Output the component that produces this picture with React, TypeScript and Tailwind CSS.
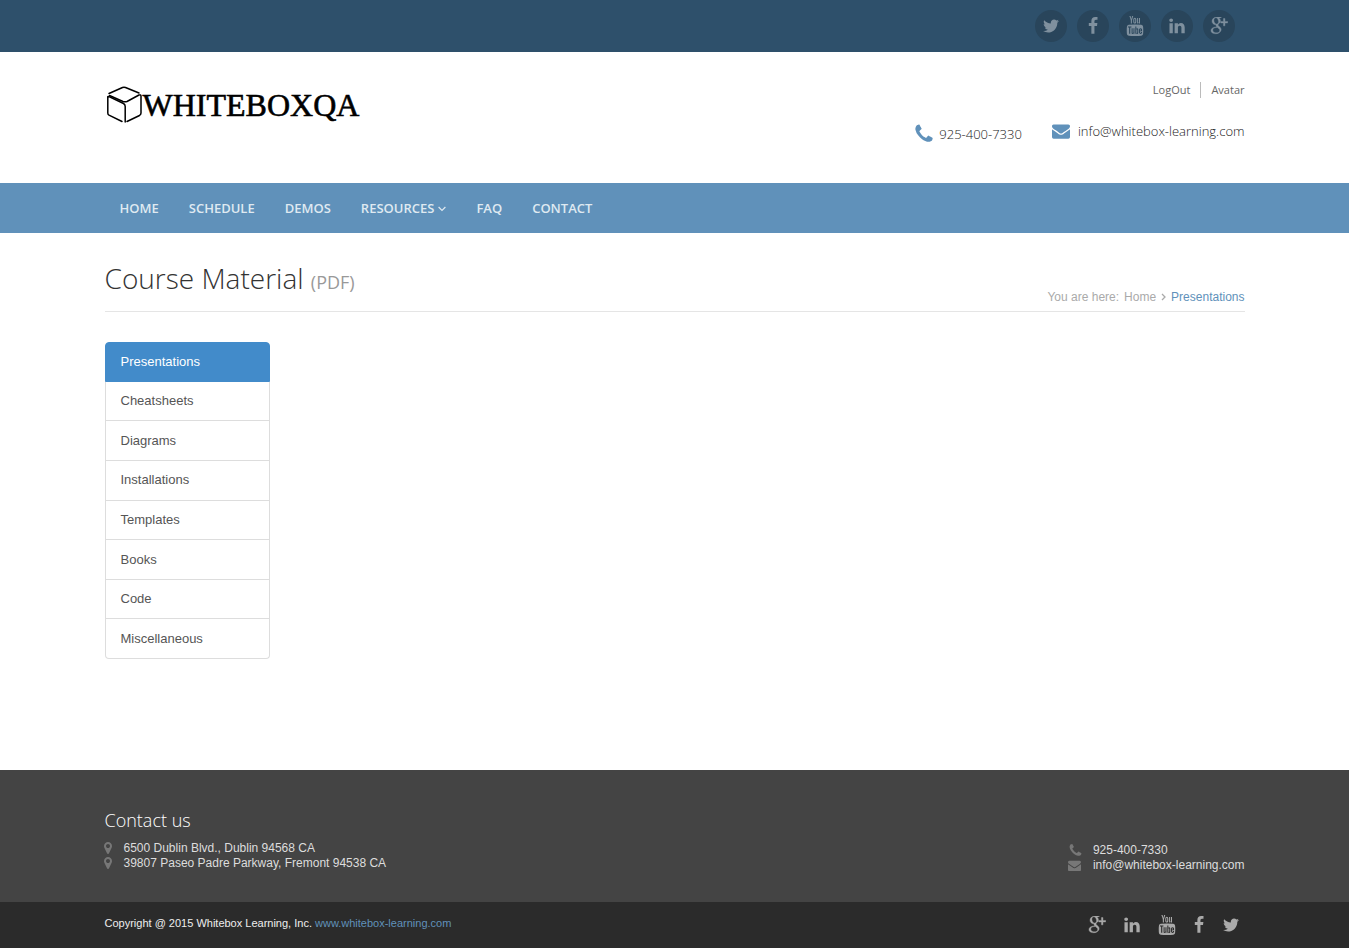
import type { ReactNode } from "react";

const PATHS = {
  twitter:
    "M1684 408q-67 98-162 167 1 14 1 42 0 130-38 259.5t-115.5 248.5-184.5 210.5-258 146-323 54.5q-271 0-496-145 35 4 78 4 225 0 401-138-105-2-188-64.5t-114-159.5q33 5 61 5 43 0 85-11-112-23-185.5-111.5t-73.5-205.5v-4q68 38 146 41-66-44-105-115t-39-154q0-88 44-163 121 149 294.5 238.5t371.5 99.5q-8-38-8-74 0-134 94.5-228.5t228.5-94.5q140 0 236 102 109-21 205-78-37 115-142 178 93-10 186-50z",
  facebook:
    "M1343 12v264h-157q-86 0-116 36t-30 108v189h293l-39 296h-254v759h-306v-759h-255v-296h255v-218q0-186 104-288.5t277-102.5q147 0 228 12z",
  youtube:
    "M1099 1244v211q0 67-39 67-23 0-45-22v-301q22-22 45-22 39 0 39 67zm338 1v46h-90v-46q0-68 45-68t45 68zm-966-218h107v-94h-312v94h105v569h100v-569zm288 569h89v-494h-89v378q-30 42-57 42-18 0-21-21-1-3-1-35v-364h-89v391q0 49 8 73 12 37 58 37 48 0 102-61v54zm429-148v-197q0-73-9-99-17-56-71-56-50 0-93 54v-217h-89v663h89v-48q45 55 93 55 54 0 71-55 9-27 9-100zm338-10v-13h-91q0 51-2 61-7 36-40 36-46 0-46-69v-87h179v-103q0-79-27-116-39-51-106-51-68 0-107 51-28 37-28 116v173q0 79 29 116 39 51 108 51 72 0 108-53 18-27 21-54 2-9 2-58zm-608-913v-210q0-69-43-69t-43 69v210q0 70 43 70t43-70zm719 751q0 234-26 350-14 59-58 99t-102 46q-184 21-555 21t-555-21q-58-6-102.5-46t-57.5-99q-26-112-26-350 0-234 26-350 14-59 58-99t103-47q183-20 554-20t555 20q58 7 102.5 47t57.5 99q26 112 26 350zm-998-1276h102l-121 399v271h-100v-271q-14-74-61-212-37-103-65-187h106l71 263zm370 333v175q0 81-28 118-38 51-106 51-67 0-105-51-28-38-28-118v-175q0-80 28-117 38-51 105-51 68 0 106 51 28 37 28 117zm335-162v499h-91v-55q-53 62-103 62-46 0-59-37-8-24-8-75v-394h91v367q0 33 1 35 3 22 21 22 27 0 57-43v-381h91z",
  linkedin:
    "M477 625v991h-330v-991h330zm21-306q1 73-50.5 122t-135.5 49h-2q-82 0-132-49t-50-122q0-74 51.5-122.5t134.5-48.5 133 48.5 51 122.5zm1166 729v568h-329v-530q0-105-40.5-164.5t-126.5-59.5q-63 0-105.5 34.5t-63.5 85.5q-11 30-11 81v553h-329q2-399 2-647t-1-296l-1-48h329v144h-2q20-32 41-56t56.5-52 87-43.5 114.5-15.5q171 0 275 113.5t104 332.5z",
  google:
    "M799 796q0 36 32 70.5t77.5 68 90.5 73.5 77 104 32 142q0 90-48 173-72 122-211 179.5t-298 57.5q-132 0-246.5-41.5t-171.5-137.5q-37-60-37-131 0-81 44.5-150t118.5-115q131-82 404-100-32-42-47.5-74t-15.5-73q0-36 21-85-46 4-68 4-148 0-249.5-96.5t-101.5-244.5q0-82 36-159t99-131q77-66 182.5-98t217.5-32h418l-138 88h-131q74 63 112 133t38 160q0 72-24.5 129.5t-59 93-69.5 65-59.5 61.5-24.5 66zm-146-96q38 0 78-16.5t66-43.5q53-57 53-159 0-58-17-125t-48.5-129.5-84.5-103.5-117-41q-42 0-82.5 19.5t-65.5 52.5q-47 59-47 160 0 46 10 97.5t31.5 103 52 92.5 75 67 96.5 26zm2 873q58 0 111.5-13t99-39 73-73 27.5-109q0-25-7-49t-14.5-42-27-41.5-29.5-35-38.5-34.5-36.5-29-41.5-30-36.5-26q-16-2-48-2-53 0-105 7t-107.5 25-97 46-68.5 74.5-27 105.5q0 70 35 123.5t91.5 83 119 44 127.5 14.5zm835-1130h270v150h-270v290h-150v-290h-270v-150h270v-290h150z",
  phone:
    "M1600 1240q0 27-10 70.5t-21 68.5q-21 50-122 106-94 51-186 51-27 0-53-3.5t-57.5-12.5-47-14.5-55.5-20.5-49-18q-98-35-175-83-127-79-264-216t-216-264q-48-77-83-175-3-9-18-49t-20.5-55.5-14.5-47-12.5-57.5-3.5-53q0-92 51-186 56-101 106-122 25-11 68.5-21t70.5-10q14 0 21 3 18 6 53 76 11 19 30 54t35 63.5 31 53.5q3 4 17.5 25t21.5 35.5 7 28.5q0 20-28.5 50t-62 55-62 53-28.5 46q0 9 5 22.5t8.5 20.5 14 24 11.5 19q76 137 174 235t235 174q2 1 19 11.5t24 14 20.5 8.5 22.5 5q18 0 46-28.5t53-62 55-62 50-28.5q14 0 28.5 7t35.5 21.5 25 17.5q25 15 53.5 31t63.5 35 54 30q70 35 76 53 3 7 3 21z",
  envelope:
    "M1792 710v794q0 66-47 113t-113 47h-1472q-66 0-113-47t-47-113v-794q44 49 101 87 362 246 497 345 57 42 92.5 65.5t94.5 48 110 24.5h2q51 0 110-24.5t94.5-48 92.5-65.5q170-123 498-345 57-39 100-87zm0-294q0 79-49 151t-122 123q-376 261-468 325-10 7-42.5 31t-54 38.5-52 32.5-57.5 27-50 9h-2q-23 0-50-9t-57.5-27-52-32.5-54-38.5-42.5-31q-91-64-262-182.5t-205-142.5q-62-42-117-115.5t-55-136.5q0-78 41.5-130t118.5-52h1472q65 0 112.5 47t47.5 113z",
  marker:
    "M1152 640q0-106-75-181t-181-75-181 75-75 181 75 181 181 75 181-75 75-181zm256 0q0 109-33 179l-364 774q-16 33-47.5 52t-67.5 19-67.5-19-46.5-52l-365-774q-33-70-33-179 0-212 150-362t362-150 362 150 150 362z",
};

type IconName = keyof typeof PATHS;

function Icon({ name, className }: { name: IconName; className: string }) {
  return (
    <svg viewBox="0 0 1792 1792" fill="currentColor" aria-hidden="true" className={`shrink-0 ${className}`}>
      <path d={PATHS[name]} stroke="currentColor" strokeWidth={name === "google" ? 40 : 0} />
    </svg>
  );
}

function Container({ children, className = "" }: { children: ReactNode; className?: string }) {
  return <div className={`mx-auto w-full max-w-[1140px] ${className}`}>{children}</div>;
}

const SOCIAL: { name: IconName; label: string; size: string; slot: string }[] = [
  { name: "twitter", label: "Twitter", size: "size-[18px]", slot: "w-[18px]" },
  { name: "facebook", label: "Facebook", size: "size-[18px]", slot: "w-3" },
  { name: "youtube", label: "YouTube", size: "size-5", slot: "w-[18px]" },
  { name: "linkedin", label: "LinkedIn", size: "size-[18px]", slot: "w-[18px]" },
  { name: "google", label: "Google Plus", size: "size-[18px]", slot: "w-[18px]" },
];

const NAV = ["HOME", "SCHEDULE", "DEMOS", "RESOURCES", "FAQ", "CONTACT"];

const MATERIALS = [
  "Presentations",
  "Cheatsheets",
  "Diagrams",
  "Installations",
  "Templates",
  "Books",
  "Code",
  "Miscellaneous",
];

function Logo() {
  return (
    <a href="#" className="flex items-center text-black">
      <svg
        viewBox="0 0 38 40"
        className="h-10 w-[38px]"
        fill="none"
        stroke="currentColor"
        strokeWidth="1.5"
        strokeLinejoin="round"
        strokeLinecap="round"
        aria-hidden="true"
      >
        <path d="M4 8.500 17.500 2.500Q19 2 20.500 2.500L34 8" />
        <path d="M4.500 10.500 18 16.500Q20 17.200 22 16.500L34 10Q36 9.500 36 11V28Q36 29.500 34.500 30.500L22 36.500" />
        <path d="M2.800 12V28Q2.800 29.500 4 30.200L17 36.500" />
        <path d="M2.800 12Q3 11 4.500 11.800L18.500 18.500Q20.200 19.500 20.200 21.500V37" />
      </svg>
      <span className="font-['Liberation_Serif',serif] text-[32px] leading-10 [-webkit-text-stroke:0.6px_black]">
        WHITEBOXQA
      </span>
    </a>
  );
}

export default function App() {
  return (
    <div className="flex min-h-screen flex-col bg-white font-['Liberation_Sans',Arial,sans-serif] text-[13px] text-[#555]">
      <div className="bg-[#2e506b]">
        <Container className="flex h-[52px] items-center justify-end gap-[10px] pr-[10px]">
          {SOCIAL.map((s) => (
            <a
              key={s.name}
              href="#"
              aria-label={s.label}
              className="flex size-8 items-center justify-center rounded-full bg-[#29455b] text-[#7f909e]"
            >
              <Icon name={s.name} className={s.size} />
            </a>
          ))}
        </Container>
      </div>

      <header className="h-[131px]">
        <Container className="flex justify-between pt-[30px]">
          <div className="pt-[3px]">
            <Logo />
          </div>
          <div className="flex flex-col items-end font-['Open_Sans',sans-serif]">
            <div className="flex items-center text-[11px] leading-4 text-[#666]">
              <a href="#" className="border-r border-[#bbb] pr-[10px]">
                LogOut
              </a>
              <a href="#" className="pl-[10px]">
                Avatar
              </a>
            </div>
            <div className="mt-[23px] flex items-start gap-[30px] text-[13px] leading-5 font-light text-[#222]">
              <a href="#" className="flex items-start gap-1 pt-[2px] leading-[22px]">
                <Icon name="phone" className="size-[22px] text-[#6091ba]" />
                925-400-7330
              </a>
              <a href="#" className="flex items-center gap-2">
                <Icon name="envelope" className="size-[18px] text-[#6091ba]" />
                info@whitebox-learning.com
              </a>
            </div>
          </div>
        </Container>
      </header>

      <nav className="bg-[#6091ba]">
        <Container className="flex h-[50px] items-center pt-px font-['Open_Sans',sans-serif] text-[13px] font-semibold text-[#dfe9f1]">
          {NAV.map((item) => (
            <a key={item} href="#" className="flex items-center gap-1 px-[15px]">
              {item}
              {item === "RESOURCES" && (
                <svg viewBox="0 0 8 6" className="h-[6px] w-2" fill="none" stroke="currentColor" strokeWidth="1.2" aria-hidden="true">
                  <path d="M0.600 1 4 4.400 7.400 1" />
                </svg>
              )}
            </a>
          ))}
        </Container>
      </nav>

      <main className="grow pb-[111px]">
        <Container>
          <div className="flex h-[79px] items-end justify-between border-b border-[#e5e5e5] pb-1">
            <h1 className="pb-1 font-['Open_Sans',sans-serif] text-[28px] leading-[42px] font-light text-[#333]">
              Course Material <small className="text-[18px] font-medium text-[#999]">(PDF)</small>
            </h1>
            <ol className="flex items-center text-[12px] leading-5 text-[#aaa]">
              <li className="pr-[5px]">You are here:</li>
              <li className="flex items-center">
                <a href="#">Home</a>
                <svg viewBox="0 0 5 8" className="mx-[5px] h-2 w-[5px]" fill="none" stroke="currentColor" strokeWidth="1.300" aria-hidden="true">
                  <path d="M1 1 4 4 1 7" />
                </svg>
              </li>
              <li className="text-[#6091ba]">Presentations</li>
            </ol>
          </div>
          <ul className="mt-[30px] grid min-h-[317px] w-[165px] grid-rows-8">
            {MATERIALS.map((m, i) => (
              <li key={m} className="flex">
                <a
                  href="#"
                  className={
                    i === 0
                      ? "flex grow items-center rounded-t border border-[#428bca] bg-[#428bca] px-[15px] text-white"
                      : i === MATERIALS.length - 1
                        ? "flex grow items-center rounded-b border border-t-0 border-[#ddd] px-[15px]"
                        : "flex grow items-center border border-t-0 border-[#ddd] px-[15px]"
                  }
                >
                  {m}
                </a>
              </li>
            ))}
          </ul>
        </Container>
      </main>

      <footer>
        <div className="bg-[#444] text-[12px] leading-[15px] text-[#ddd]">
          <Container className="flex h-[132px] items-start justify-between pt-[38px]">
            <div>
              <h2 className="font-['Open_Sans',sans-serif] text-[18px] leading-6 font-light text-white">Contact us</h2>
              <address className="mt-[9px] not-italic">
                <p className="flex items-start">
                  <Icon name="marker" className="-ml-1 mr-[9px] size-[14px] text-[#777]" />
                  6500 Dublin Blvd., Dublin 94568 CA
                </p>
                <p className="flex items-start">
                  <Icon name="marker" className="-ml-1 mr-[9px] size-[14px] text-[#777]" />
                  39807 Paseo Padre Parkway, Fremont 94538 CA
                </p>
              </address>
            </div>
            <div className="pt-[35px]">
              <a href="#" className="flex items-center gap-[10px]">
                <Icon name="phone" className="size-[15px] text-[#777]" />
                925-400-7330
              </a>
              <a href="#" className="flex items-center gap-3">
                <Icon name="envelope" className="size-[13px] text-[#777]" />
                info@whitebox-learning.com
              </a>
            </div>
          </Container>
        </div>
        <div className="bg-[#2b2b2b]">
          <Container className="flex h-[46px] items-center justify-between pr-[5px]">
            <p className="pb-1 text-[11px] leading-4 text-[#eee]">
              Copyright @ 2015 Whitebox Learning, Inc.{" "}
              <a href="#" className="text-[#6091ba]">
                www.whitebox-learning.com
              </a>
            </p>
            <div className="flex items-center gap-[17px] text-[#aaa]">
              {[...SOCIAL].reverse().map((s) => (
                <a key={s.name} href="#" aria-label={s.label} className={`flex justify-center ${s.slot}`}>
                  <Icon name={s.name} className={s.size} />
                </a>
              ))}
            </div>
          </Container>
        </div>
      </footer>
    </div>
  );
}
